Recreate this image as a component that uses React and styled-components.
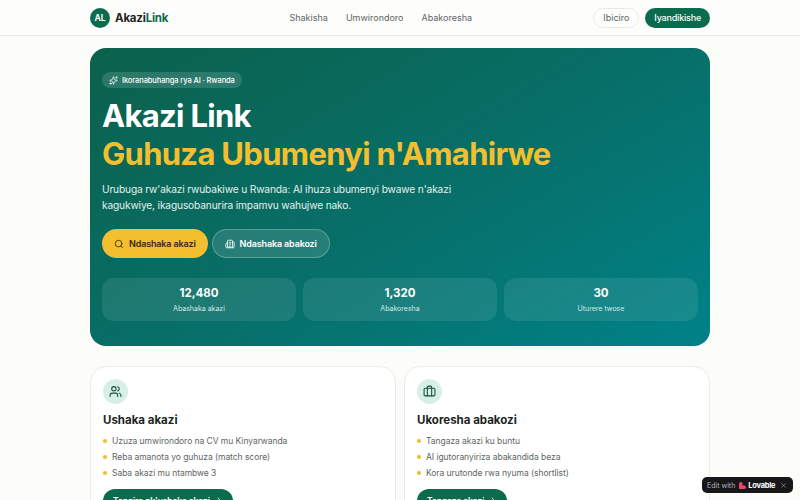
import React from 'react';
import styled, { createGlobalStyle } from 'styled-components';
import { Sparkles, Search, Building2, Users, Briefcase, ArrowRight, X } from 'lucide-react';

const GlobalStyle = createGlobalStyle`
    html, body {
        margin: 0;
        padding: 0;
        background: #fcfcf9;
        font-family: "Inter", "Liberation Sans", sans-serif;
        overflow: hidden;
    }
    * { box-sizing: border-box; }
`;

const Header = styled.header`
    height: 36px;
    border-bottom: 1px solid #e9e9e5;
    background: #fdfdfb;
`;

const HeaderInner = styled.div`
    width: 620px;
    height: 35px;
    margin: 0 auto;
    display: flex;
    align-items: center;
    justify-content: space-between;
`;

const Brand = styled.div`
    display: flex;
    align-items: center;
    gap: 5px;
`;

const LogoMark = styled.div`
    width: 20px;
    height: 20px;
    border-radius: 50%;
    background: #0b6b4d;
    color: #fff;
    font-size: 8.5px;
    font-weight: 700;
    display: flex;
    align-items: center;
    justify-content: center;
`;

const BrandName = styled.div`
    font-size: 11.5px;
    font-weight: 700;
    letter-spacing: -0.2px;
    color: #1c2422;
    span { color: #0b6b4d; }
`;

const Nav = styled.nav`
    display: flex;
    gap: 18px;
    font-size: 9px;
    color: #5e6663;
`;

const HeaderActions = styled.div`
    display: flex;
    gap: 6px;
    align-items: center;
`;

const HeaderButton = styled.button`
    height: 20px;
    padding: 0 9px;
    border-radius: 10px;
    font-family: inherit;
    font-size: 9px;
    font-weight: ${props => (props.$primary ? 500 : 400)};
    letter-spacing: ${props => (props.$primary ? '-0.2px' : '0')};
    color: ${props => (props.$primary ? '#fff' : '#5e6663')};
    background: ${props => (props.$primary ? '#0b6b4d' : '#fdfdfb')};
    border: ${props => (props.$primary ? 'none' : '1px solid #e9e9e5')};
`;

const Main = styled.main`
    width: 620px;
    margin: 12px auto 0;
`;

const Hero = styled.section`
    height: 298px;
    border-radius: 16px;
    padding: 24px 12px 0;
    background: linear-gradient(150deg, #0b614b 0%, #07706a 55%, #008288 100%);
    color: #fff;
`;

const Badge = styled.div`
    display: flex;
    width: fit-content;
    align-items: center;
    gap: 4px;
    height: 16px;
    padding: 0 7px;
    border-radius: 8px;
    background: rgba(255, 255, 255, 0.14);
    font-size: 7.5px;
    font-weight: 500;
    letter-spacing: -0.1px;
`;

const Title = styled.h1`
    margin: 9px 0 0;
    font-size: 31px;
    line-height: 38px;
    font-weight: 700;
    letter-spacing: -0.7px;
`;

const TitleAccent = styled.span`
    display: block;
    color: #f3bf2e;
`;

const Lead = styled.p`
    margin: 8px 0 0;
    font-size: 10.2px;
    line-height: 16px;
    color: #e4f0ed;
    width: 350px;
    letter-spacing: -0.15px;
`;

const HeroActions = styled.div`
    display: flex;
    gap: 4px;
    margin-top: 16px;
`;

const HeroButton = styled.button`
    height: 29px;
    display: flex;
    align-items: center;
    gap: 5px;
    padding: 0 12px;
    border-radius: 15px;
    font-family: inherit;
    font-size: 9px;
    font-weight: 600;
    letter-spacing: -0.15px;
    color: ${props => (props.$accent ? '#33290c' : '#fff')};
    background: ${props => (props.$accent ? '#f3bf2e' : 'rgba(255, 255, 255, 0.12)')};
    border: ${props => (props.$accent ? 'none' : '1px solid rgba(255, 255, 255, 0.25)')};
`;

const Stats = styled.div`
    display: grid;
    grid-template-columns: repeat(3, 1fr);
    gap: 7px;
    margin-top: 20px;
`;

const Stat = styled.div`
    height: 43px;
    border-radius: 12px;
    background: rgba(255, 255, 255, 0.09);
    display: flex;
    flex-direction: column;
    align-items: center;
    justify-content: center;
    gap: 3px;
`;

const StatValue = styled.div`
    font-size: 11.5px;
    line-height: 15px;
    font-weight: 700;
`;

const StatLabel = styled.div`
    font-size: 7px;
    line-height: 10px;
    color: #d5e8e5;
`;

const Cards = styled.div`
    display: grid;
    grid-template-columns: 1fr 1fr;
    gap: 8px;
    margin-top: 20px;
`;

const Card = styled.article`
    height: 200px;
    padding: 12px;
    border-radius: 16px;
    background: #fff;
    border: 1px solid #ececE8;
`;

const IconCircle = styled.div`
    width: 25px;
    height: 25px;
    border-radius: 50%;
    background: #d8efe6;
    color: #17503d;
    display: flex;
    align-items: center;
    justify-content: center;
`;

const CardTitle = styled.h2`
    margin: 8px 0 0;
    font-size: 11.5px;
    line-height: 16px;
    font-weight: 700;
    color: #1c2422;
`;

const Points = styled.ul`
    list-style: none;
    margin: 5px 0 0;
    padding: 0;
`;

const Point = styled.li`
    display: flex;
    align-items: center;
    gap: 5.5px;
    height: 16px;
    font-size: 8.5px;
    letter-spacing: -0.05px;
    color: #5e6663;
    &::before {
        content: '';
        width: 3.5px;
        height: 3.5px;
        border-radius: 50%;
        background: #f3bf2e;
    }
`;

const CardButton = styled.button`
    margin-top: 8px;
    height: 24px;
    display: inline-flex;
    align-items: center;
    gap: 3px;
    padding: 0 10px;
    border: none;
    border-radius: 12px;
    background: #0b6b4d;
    color: #fff;
    font-family: inherit;
    font-size: 8.5px;
    font-weight: 600;
    letter-spacing: -0.1px;
`;

const EditBadge = styled.div`
    position: fixed;
    right: 7px;
    bottom: 7px;
    width: 91px;
    height: 16px;
    border-radius: 5px;
    background: #17171a;
    color: #b5b5b5;
    font-size: 7px;
    white-space: nowrap;
    display: flex;
    align-items: center;
    padding: 0 6px 0 5px;
    gap: 4px;
`;

const LovableName = styled.span`
    display: flex;
    align-items: center;
    gap: 2px;
    color: #fff;
    font-weight: 700;
    font-size: 7.5px;
    letter-spacing: -0.25px;
`;

const CloseMark = styled(X)`
    margin-left: auto;
`;

const App = () => {
    return (
        <>
            <GlobalStyle />
            <Header>
                <HeaderInner>
                    <Brand>
                        <LogoMark>AL</LogoMark>
                        <BrandName>Akazi<span>Link</span></BrandName>
                    </Brand>
                    <Nav>
                        <span>Shakisha</span>
                        <span>Umwirondoro</span>
                        <span>Abakoresha</span>
                    </Nav>
                    <HeaderActions>
                        <HeaderButton>Ibiciro</HeaderButton>
                        <HeaderButton $primary>Iyandikishe</HeaderButton>
                    </HeaderActions>
                </HeaderInner>
            </Header>
            <Main>
                <Hero>
                    <Badge><Sparkles size={9} />Ikoranabuhanga rya AI · Rwanda</Badge>
                    <Title>
                        Akazi Link
                        <TitleAccent>Guhuza Ubumenyi n'Amahirwe</TitleAccent>
                    </Title>
                    <Lead>
                        Urubuga rw'akazi rwubakiwe u Rwanda: AI ihuza ubumenyi bwawe n'akazi kagukwiye, ikagusobanurira impamvu wahujwe nako.
                    </Lead>
                    <HeroActions>
                        <HeroButton $accent><Search size={10} />Ndashaka akazi</HeroButton>
                        <HeroButton><Building2 size={10} />Ndashaka abakozi</HeroButton>
                    </HeroActions>
                    <Stats>
                        <Stat><StatValue>12,480</StatValue><StatLabel>Abashaka akazi</StatLabel></Stat>
                        <Stat><StatValue>1,320</StatValue><StatLabel>Abakoresha</StatLabel></Stat>
                        <Stat><StatValue>30</StatValue><StatLabel>Uturere twose</StatLabel></Stat>
                    </Stats>
                </Hero>
                <Cards>
                    <Card>
                        <IconCircle><Users size={13} /></IconCircle>
                        <CardTitle>Ushaka akazi</CardTitle>
                        <Points>
                            <Point>Uzuza umwirondoro na CV mu Kinyarwanda</Point>
                            <Point>Reba amanota yo guhuza (match score)</Point>
                            <Point>Saba akazi mu ntambwe 3</Point>
                        </Points>
                        <CardButton>Tangira nk'ushaka akazi <ArrowRight size={10} /></CardButton>
                    </Card>
                    <Card>
                        <IconCircle><Briefcase size={13} /></IconCircle>
                        <CardTitle>Ukoresha abakozi</CardTitle>
                        <Points>
                            <Point>Tangaza akazi ku buntu</Point>
                            <Point>AI igutoranyiriza abakandida beza</Point>
                            <Point>Kora urutonde rwa nyuma (shortlist)</Point>
                        </Points>
                        <CardButton>Tangaza akazi <ArrowRight size={10} /></CardButton>
                    </Card>
                </Cards>
            </Main>
            <EditBadge>
                Edit with
                <LovableName>
                    <svg width="7" height="7" viewBox="0 0 10 10">
                        <path d="M0 2.5 A2.5 2.5 0 0 1 5 2.5 V5 H7.5 A2.5 2.5 0 0 1 7.5 10 H0 Z" fill="#f0436b" />
                    </svg>
                    Lovable
                </LovableName>
                <CloseMark size={7} />
            </EditBadge>
        </>
    );
};

export default App;
